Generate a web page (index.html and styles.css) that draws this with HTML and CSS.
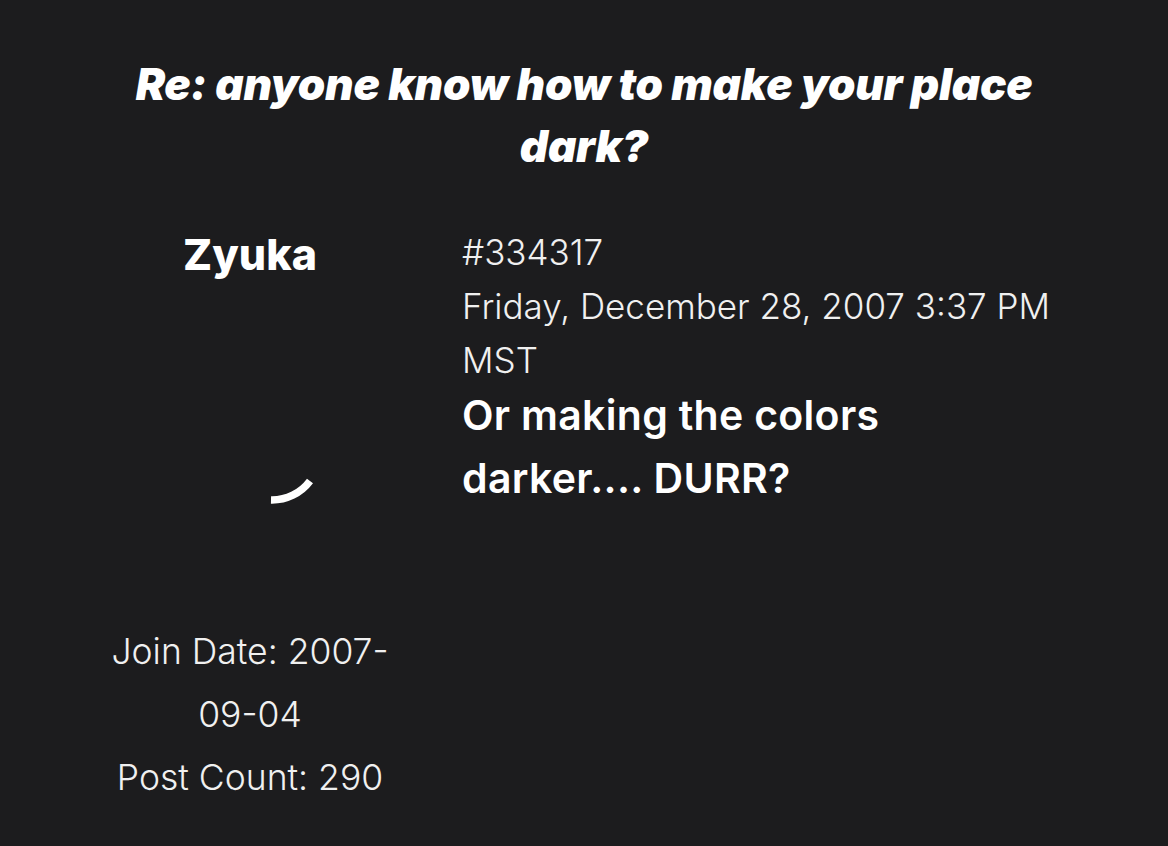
FILE: index.html
```html
<!DOCTYPE html>
<html>
<head>
<meta charset="utf-8">
<link rel="stylesheet" href="styles.css">
</head>
<body>
<main class="page">
  <h1 class="thread-title">Re: anyone know how to make your place dark?</h1>
  <article class="post">
    <aside class="author">
      <div class="author-name">Zyuka</div>
      <div class="avatar">
        <svg class="spinner" width="290" height="337" viewBox="0 0 290 337">
          <path d="M166 217 A47.5 47.5 0 0 0 205 198" fill="none" stroke="#ffffff" stroke-width="7.5"/>
        </svg>
      </div>
      <div class="author-stats">
        <p>Join Date: 2007-09-04</p>
        <p>Post Count: 290</p>
      </div>
    </aside>
    <section class="post-main">
      <div class="post-meta">
        <div>#334317</div>
        <div>Friday, December 28, 2007 3:37 PM MST</div>
      </div>
      <div class="post-body">Or making the colors darker.... DURR?</div>
    </section>
  </article>
</main>
</body>
</html>
```
FILE: styles.css
```css
html, body {
  margin: 0;
  padding: 0;
  background: #1c1c1e;
}
body {
  font-family: Inter, "Noto Sans", sans-serif;
  color: #ffffff;
}
.page {
  padding: 53px 0 40px;
}
.thread-title {
  margin: 0 auto;
  width: 940px;
  text-align: center;
  font-size: 44px;
  line-height: 62px;
  font-weight: 900;
  font-style: italic;
  letter-spacing: -0.25px;
}
.post {
  display: grid;
  grid-template-columns: 290px 596px;
  column-gap: 67px;
  padding-left: 105px;
  margin-top: 48px;
}
.author {
  text-align: center;
}
.author-name {
  font-size: 43px;
  font-weight: 800;
  line-height: 58px;
}
.avatar {
  height: 337px;
}
.spinner {
  display: block;
}
.author-stats p {
  margin: 0;
  font-size: 35.5px;
  font-weight: 300;
  line-height: 63px;
  color: #f0f0f0;
}
.post-meta {
  font-size: 35px;
  font-weight: 300;
  line-height: 54px;
  color: #f0f0f0;
}
.post-body {
  margin-top: -3px;
  font-size: 41px;
  font-weight: 600;
  line-height: 63px;
  letter-spacing: 0.3px;
}
```
